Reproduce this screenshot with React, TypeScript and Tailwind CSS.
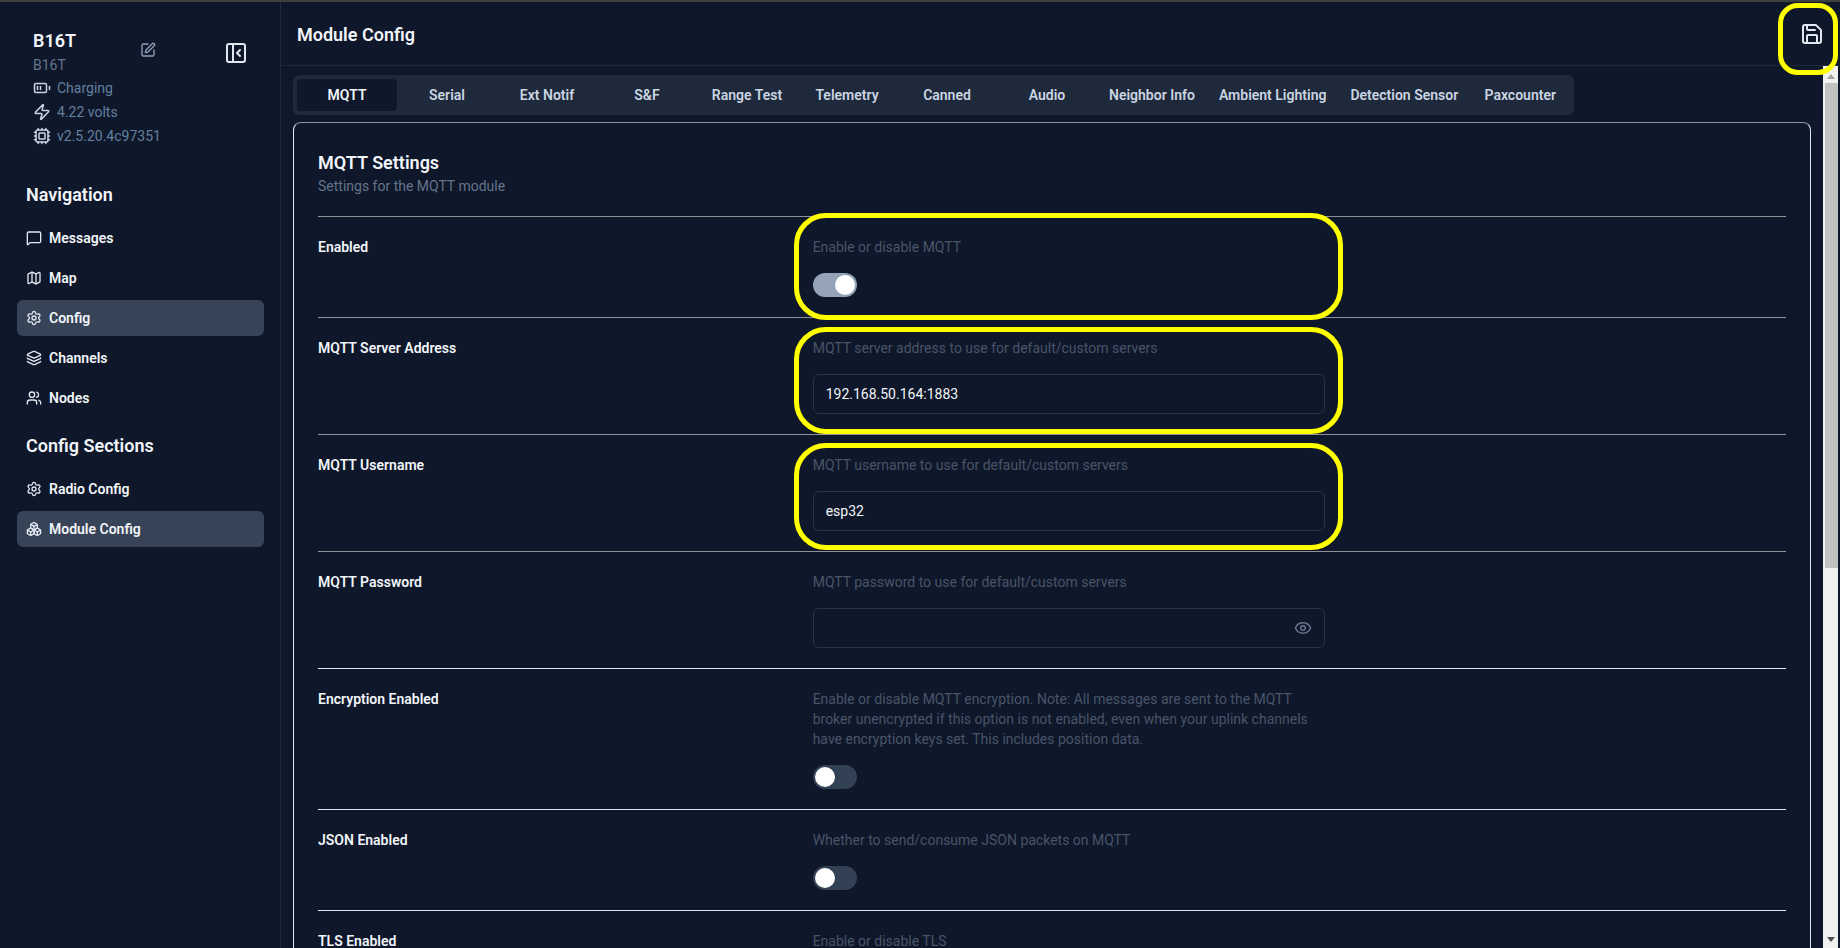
import { BatteryMedium, Boxes, Cpu, Eye, Layers, Map as MapIcon, MessageSquare, PanelLeftClose, Save, Settings, SquarePen, Users, Zap } from 'lucide-react';
import type { LucideIcon } from 'lucide-react';

const tabs = ['MQTT', 'Serial', 'Ext Notif', 'S&F', 'Range Test', 'Telemetry', 'Canned', 'Audio', 'Neighbor Info', 'Ambient Lighting', 'Detection Sensor', 'Paxcounter'];

function NavItem({ icon: Icon, label, active }: { icon: LucideIcon; label: string; active?: boolean }) {
  return (
    <div className={`flex h-9 items-center gap-[7px] rounded-md px-[9px] text-sm font-semibold text-slate-100 ${active ? 'bg-[#374357]' : ''}`}>
      <Icon size={16} className="text-slate-200" />
      <span>{label}</span>
    </div>
  );
}

function InfoRow({ icon: Icon, text }: { icon: LucideIcon; text: string }) {
  return (
    <div className="flex h-6 items-center gap-[6px] text-sm text-[#64809f]">
      <Icon size={18} className="text-slate-300" />
      <span>{text}</span>
    </div>
  );
}

function Sidebar() {
  return (
    <aside className="flex w-[281px] shrink-0 flex-col border-r border-[#1e293b]">
      <div className="relative pl-[33px] pt-[27px]">
        <div className="text-lg font-semibold leading-6 text-slate-100">B16T</div>
        <div className="-mb-px text-sm leading-6 text-[#64748b]">B16T</div>
        <InfoRow icon={BatteryMedium} text="Charging" />
        <InfoRow icon={Zap} text="4.22 volts" />
        <InfoRow icon={Cpu} text="v2.5.20.4c97351" />
        <SquarePen size={16} className="absolute left-[140px] top-[40px] text-slate-400" />
        <PanelLeftClose size={24} className="absolute left-[224px] top-[39px] text-slate-200" />
      </div>
      <div className="pl-[17px] pr-4 pt-[33px]">
        <h2 className="pl-[9px] text-lg font-semibold leading-7 text-slate-100">Navigation</h2>
        <div className="mt-[11px] flex flex-col gap-1">
          <NavItem icon={MessageSquare} label="Messages" />
          <NavItem icon={MapIcon} label="Map" />
          <NavItem icon={Settings} label="Config" active />
          <NavItem icon={Layers} label="Channels" />
          <NavItem icon={Users} label="Nodes" />
        </div>
        <h2 className="mt-[16px] pl-[9px] text-lg font-semibold leading-7 text-slate-100">Config Sections</h2>
        <div className="mt-[11px] flex flex-col gap-1">
          <NavItem icon={Settings} label="Radio Config" />
          <NavItem icon={Boxes} label="Module Config" active />
        </div>
      </div>
    </aside>
  );
}

function Toggle({ on }: { on?: boolean }) {
  return (
    <div className={`mt-4 flex h-6 w-11 items-center rounded-full p-0.5 ${on ? 'justify-end bg-[#94a3b8]' : 'bg-[#334155]'}`}>
      <div className="h-5 w-5 rounded-full bg-white" />
    </div>
  );
}

function Row({ label, desc, line = 'border-[#e2e8f0]', children }: { label: string; desc: string; line?: string; children?: React.ReactNode }) {
  return (
    <div className={`grid grid-cols-3 gap-4 border-t ${line} pb-5 pt-5`}>
      <div className="text-sm font-semibold leading-5 text-slate-100">{label}</div>
      <div className="col-span-2">
        <p className="max-w-lg text-sm leading-5 text-[#475569]">{desc}</p>
        {children}
      </div>
    </div>
  );
}

function TextField({ value, password }: { value?: string; password?: boolean }) {
  return (
    <div className="mt-4 flex h-10 w-[512px] items-center justify-between rounded-md border border-[#273449] px-[12px] text-sm text-slate-100">
      <span>{value}</span>
      {password && <Eye size={18} className="text-[#64748b]" />}
    </div>
  );
}

function Highlight({ className }: { className: string }) {
  return <div className={`pointer-events-none absolute border-[5px] border-[#ffff00] ${className}`} />;
}

export default function App() {
  return (
    <div className="relative flex h-screen flex-col overflow-hidden bg-[#0f172a] font-['Roboto',sans-serif]">
      <div className="h-[2px] shrink-0 bg-[#3d403c]" />
      <div className="flex min-h-0 flex-1">
        <Sidebar />
        <main className="flex min-w-0 flex-1 flex-col">
          <header className="flex h-[64px] shrink-0 items-center justify-between border-b border-[#1e293b] pl-4 pr-[16px]">
            <h1 className="pt-[3px] text-lg font-semibold text-slate-100">Module Config</h1>
            <Save size={24} className="text-slate-200" />
          </header>
          <div className="flex min-h-0 flex-1">
            <div className="min-w-0 flex-1 overflow-hidden pl-[12px] pr-[12px] pt-[9px]">
              <div className="flex h-10 w-fit items-center rounded-md bg-[#1e293b] p-1">
                {tabs.map((t, i) => (
                  <div key={t} className={`flex h-8 min-w-[100px] items-center justify-center rounded-sm px-3 text-sm font-semibold ${i === 0 ? 'bg-[#0f172a] text-slate-100' : 'text-slate-300'}`}>
                    {t}
                  </div>
                ))}
              </div>
              <section className="mt-[7px] rounded-lg border border-[#e2e8f0] border-t-[#8f9196] px-6 pt-[26px]">
                <h2 className="text-lg font-semibold leading-7 text-slate-100">MQTT Settings</h2>
                <p className="-mt-px text-sm leading-5 text-[#64748b]">Settings for the MQTT module</p>
                <div className="mt-5">
                  <Row label="Enabled" desc="Enable or disable MQTT" line="border-[#8f9196]">
                    <Toggle on />
                  </Row>
                  <Row label="MQTT Server Address" desc="MQTT server address to use for default/custom servers" line="border-[#8f9196]">
                    <TextField value="192.168.50.164:1883" />
                  </Row>
                  <Row label="MQTT Username" desc="MQTT username to use for default/custom servers" line="border-[#8f9196]">
                    <TextField value="esp32" />
                  </Row>
                  <Row label="MQTT Password" desc="MQTT password to use for default/custom servers" line="border-[#8f9196]">
                    <TextField password />
                  </Row>
                  <Row label="Encryption Enabled" desc="Enable or disable MQTT encryption. Note: All messages are sent to the MQTT broker unencrypted if this option is not enabled, even when your uplink channels have encryption keys set. This includes position data.">
                    <Toggle />
                  </Row>
                  <Row label="JSON Enabled" desc="Whether to send/consume JSON packets on MQTT">
                    <Toggle />
                  </Row>
                  <Row label="TLS Enabled" desc="Enable or disable TLS">
                    <Toggle />
                  </Row>
                </div>
              </section>
            </div>
            <div className="mr-[2px] flex w-[15px] shrink-0 flex-col items-center bg-[#f1f1f1]">
              <div className="mt-[8px] h-0 w-0 border-x-[4px] border-b-[5px] border-x-transparent border-b-[#a3a3a3]" />
              <div className="ml-[2px] mt-[4px] h-[485px] w-[13px] bg-[#c1c1c1]" />
              <div className="mb-[6px] mt-auto h-0 w-0 border-x-[4px] border-t-[5px] border-x-transparent border-t-[#505050]" />
            </div>
          </div>
        </main>
      </div>
      <Highlight className="left-[1778px] top-[3px] h-[72px] w-[60px] rounded-[20px]" />
      <Highlight className="left-[794px] top-[213px] h-[107px] w-[549px] rounded-[32px]" />
      <Highlight className="left-[794px] top-[327px] h-[107px] w-[549px] rounded-[32px]" />
      <Highlight className="left-[794px] top-[443px] h-[107px] w-[549px] rounded-[32px]" />
    </div>
  );
}
